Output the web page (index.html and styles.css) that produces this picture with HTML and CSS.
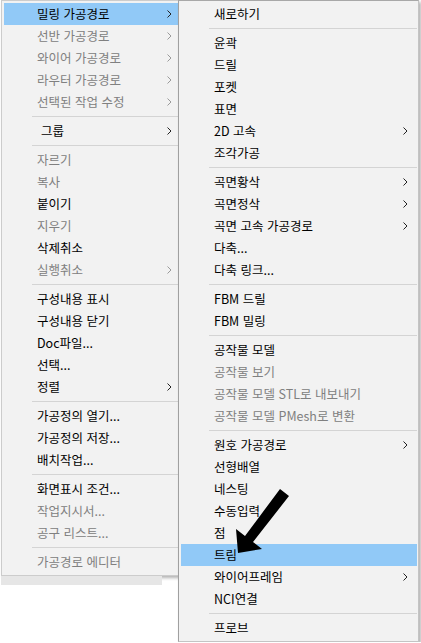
FILE: index.html
```html
<!DOCTYPE html>
<html lang="ko">
<head>
    <meta charset="UTF-8">
    <title>밀링 가공경로 메뉴</title>
    <link rel="stylesheet" href="styles.css">
</head>
<body>
    <div class="screen">
        <div class="left-col">
            <div class="menu main-menu">
                <div class="item active">밀링 가공경로<svg class="chev" width="5" height="8" viewBox="0 0 5 8"><path d="M0.5 0.5 L4 4 L0.5 7.5"/></svg></div>
                <div class="item off">선반 가공경로<svg class="chev" width="5" height="8" viewBox="0 0 5 8"><path d="M0.5 0.5 L4 4 L0.5 7.5"/></svg></div>
                <div class="item off">와이어 가공경로<svg class="chev" width="5" height="8" viewBox="0 0 5 8"><path d="M0.5 0.5 L4 4 L0.5 7.5"/></svg></div>
                <div class="item off">라우터 가공경로<svg class="chev" width="5" height="8" viewBox="0 0 5 8"><path d="M0.5 0.5 L4 4 L0.5 7.5"/></svg></div>
                <div class="item off">선택된 작업 수정<svg class="chev" width="5" height="8" viewBox="0 0 5 8"><path d="M0.5 0.5 L4 4 L0.5 7.5"/></svg></div>
                <div class="sep"></div>
                <div class="item indent">그룹<svg class="chev" width="5" height="8" viewBox="0 0 5 8"><path d="M0.5 0.5 L4 4 L0.5 7.5"/></svg></div>
                <div class="sep"></div>
                <div class="item off">자르기</div>
                <div class="item off">복사</div>
                <div class="item">붙이기</div>
                <div class="item off">지우기</div>
                <div class="item">삭제취소</div>
                <div class="item off">실행취소<svg class="chev" width="5" height="8" viewBox="0 0 5 8"><path d="M0.5 0.5 L4 4 L0.5 7.5"/></svg></div>
                <div class="sep"></div>
                <div class="item">구성내용 표시</div>
                <div class="item">구성내용 닫기</div>
                <div class="item">Doc파일...</div>
                <div class="item">선택...</div>
                <div class="item">정렬<svg class="chev" width="5" height="8" viewBox="0 0 5 8"><path d="M0.5 0.5 L4 4 L0.5 7.5"/></svg></div>
                <div class="sep"></div>
                <div class="item">가공정의 열기...</div>
                <div class="item">가공정의 저장...</div>
                <div class="item">배치작업...</div>
                <div class="sep"></div>
                <div class="item">화면표시 조건...</div>
                <div class="item off">작업지시서...</div>
                <div class="item off">공구 리스트...</div>
                <div class="sep"></div>
                <div class="item off">가공경로 에디터</div>
            </div>
            <div class="app-strip"></div>
        </div>

        <div class="menu sub-menu">
            <div class="item">새로하기</div>
            <div class="sep"></div>
            <div class="item">윤곽</div>
            <div class="item">드릴</div>
            <div class="item">포켓</div>
            <div class="item">표면</div>
            <div class="item">2D 고속<svg class="chev" width="5" height="8" viewBox="0 0 5 8"><path d="M0.5 0.5 L4 4 L0.5 7.5"/></svg></div>
            <div class="item">조각가공</div>
            <div class="sep"></div>
            <div class="item">곡면황삭<svg class="chev" width="5" height="8" viewBox="0 0 5 8"><path d="M0.5 0.5 L4 4 L0.5 7.5"/></svg></div>
            <div class="item">곡면정삭<svg class="chev" width="5" height="8" viewBox="0 0 5 8"><path d="M0.5 0.5 L4 4 L0.5 7.5"/></svg></div>
            <div class="item">곡면 고속 가공경로<svg class="chev" width="5" height="8" viewBox="0 0 5 8"><path d="M0.5 0.5 L4 4 L0.5 7.5"/></svg></div>
            <div class="item">다축...</div>
            <div class="item">다축 링크...</div>
            <div class="sep"></div>
            <div class="item">FBM 드릴</div>
            <div class="item">FBM 밀링</div>
            <div class="sep"></div>
            <div class="item">공작물 모델</div>
            <div class="item off">공작물 보기</div>
            <div class="item off">공작물 모델 STL로 내보내기</div>
            <div class="item off">공작물 모델 PMesh로 변환</div>
            <div class="sep"></div>
            <div class="item">원호 가공경로<svg class="chev" width="5" height="8" viewBox="0 0 5 8"><path d="M0.5 0.5 L4 4 L0.5 7.5"/></svg></div>
            <div class="item">선형배열</div>
            <div class="item">네스팅</div>
            <div class="item">수동입력</div>
            <div class="item">점</div>
            <div class="item active">트림</div>
            <div class="item">와이어프레임<svg class="chev" width="5" height="8" viewBox="0 0 5 8"><path d="M0.5 0.5 L4 4 L0.5 7.5"/></svg></div>
            <div class="item">NCI연결</div>
            <div class="sep"></div>
            <div class="item">프로브</div>
        </div>
    </div>

    <!-- 주석용 화살표 -->
    <svg class="pointer" width="421" height="643" viewBox="0 0 421 643">
        <polygon points="280,489 289,496 253,542 262,549 238,553 236,529 245,536"/>
    </svg>
</body>
</html>
```

FILE: styles.css
```css
body {
    margin: 0;
    background: #ffffff;
    font-family: "Noto Sans CJK KR", sans-serif;
    font-size: 12.5px;
    color: #000;
}
.screen {
    display: flex;
    align-items: flex-start;
    padding-left: 1px;
}
.left-col {
    display: flex;
    flex-direction: column;
}
.app-strip {
    width: 161px;
    height: 9px;
    background: #e6e6e6;
}
.menu {
    display: flex;
    flex-direction: column;
    padding: 2px 0;
    background: #f2f2f2;
    border: 1px solid #cccccc;
    box-shadow: 2px 2px 3px rgba(0, 0, 0, 0.3);
}
.main-menu {
    width: 180px;
}
.sub-menu {
    position: relative;
    width: 239px;
    margin-left: -5px;
    border-color: #a8a8a8 #c4c4c4 #c4c4c4 #a0a0a0;
}
.item {
    display: flex;
    align-items: center;
    height: 22px;
    line-height: 22px;
    margin: 0 1px 0 2px;
    padding: 0 9px 0 33px;
    white-space: nowrap;
}
.item.indent {
    padding-left: 37px;
}
.item.active {
    background: #91c9f7;
}
.item.off {
    color: #808080;
}
.chev {
    margin-left: auto;
    fill: none;
    stroke: #222;
    stroke-width: 1;
}
.item.off .chev {
    stroke: #9a9a9a;
}
.sep {
    height: 1px;
    margin: 3px 1px 3px 30px;
    background: #d4d4d4;
}
.pointer {
    position: absolute;
    left: 0;
    top: 0;
    pointer-events: none;
}
.pointer polygon {
    fill: #000;
}
```
